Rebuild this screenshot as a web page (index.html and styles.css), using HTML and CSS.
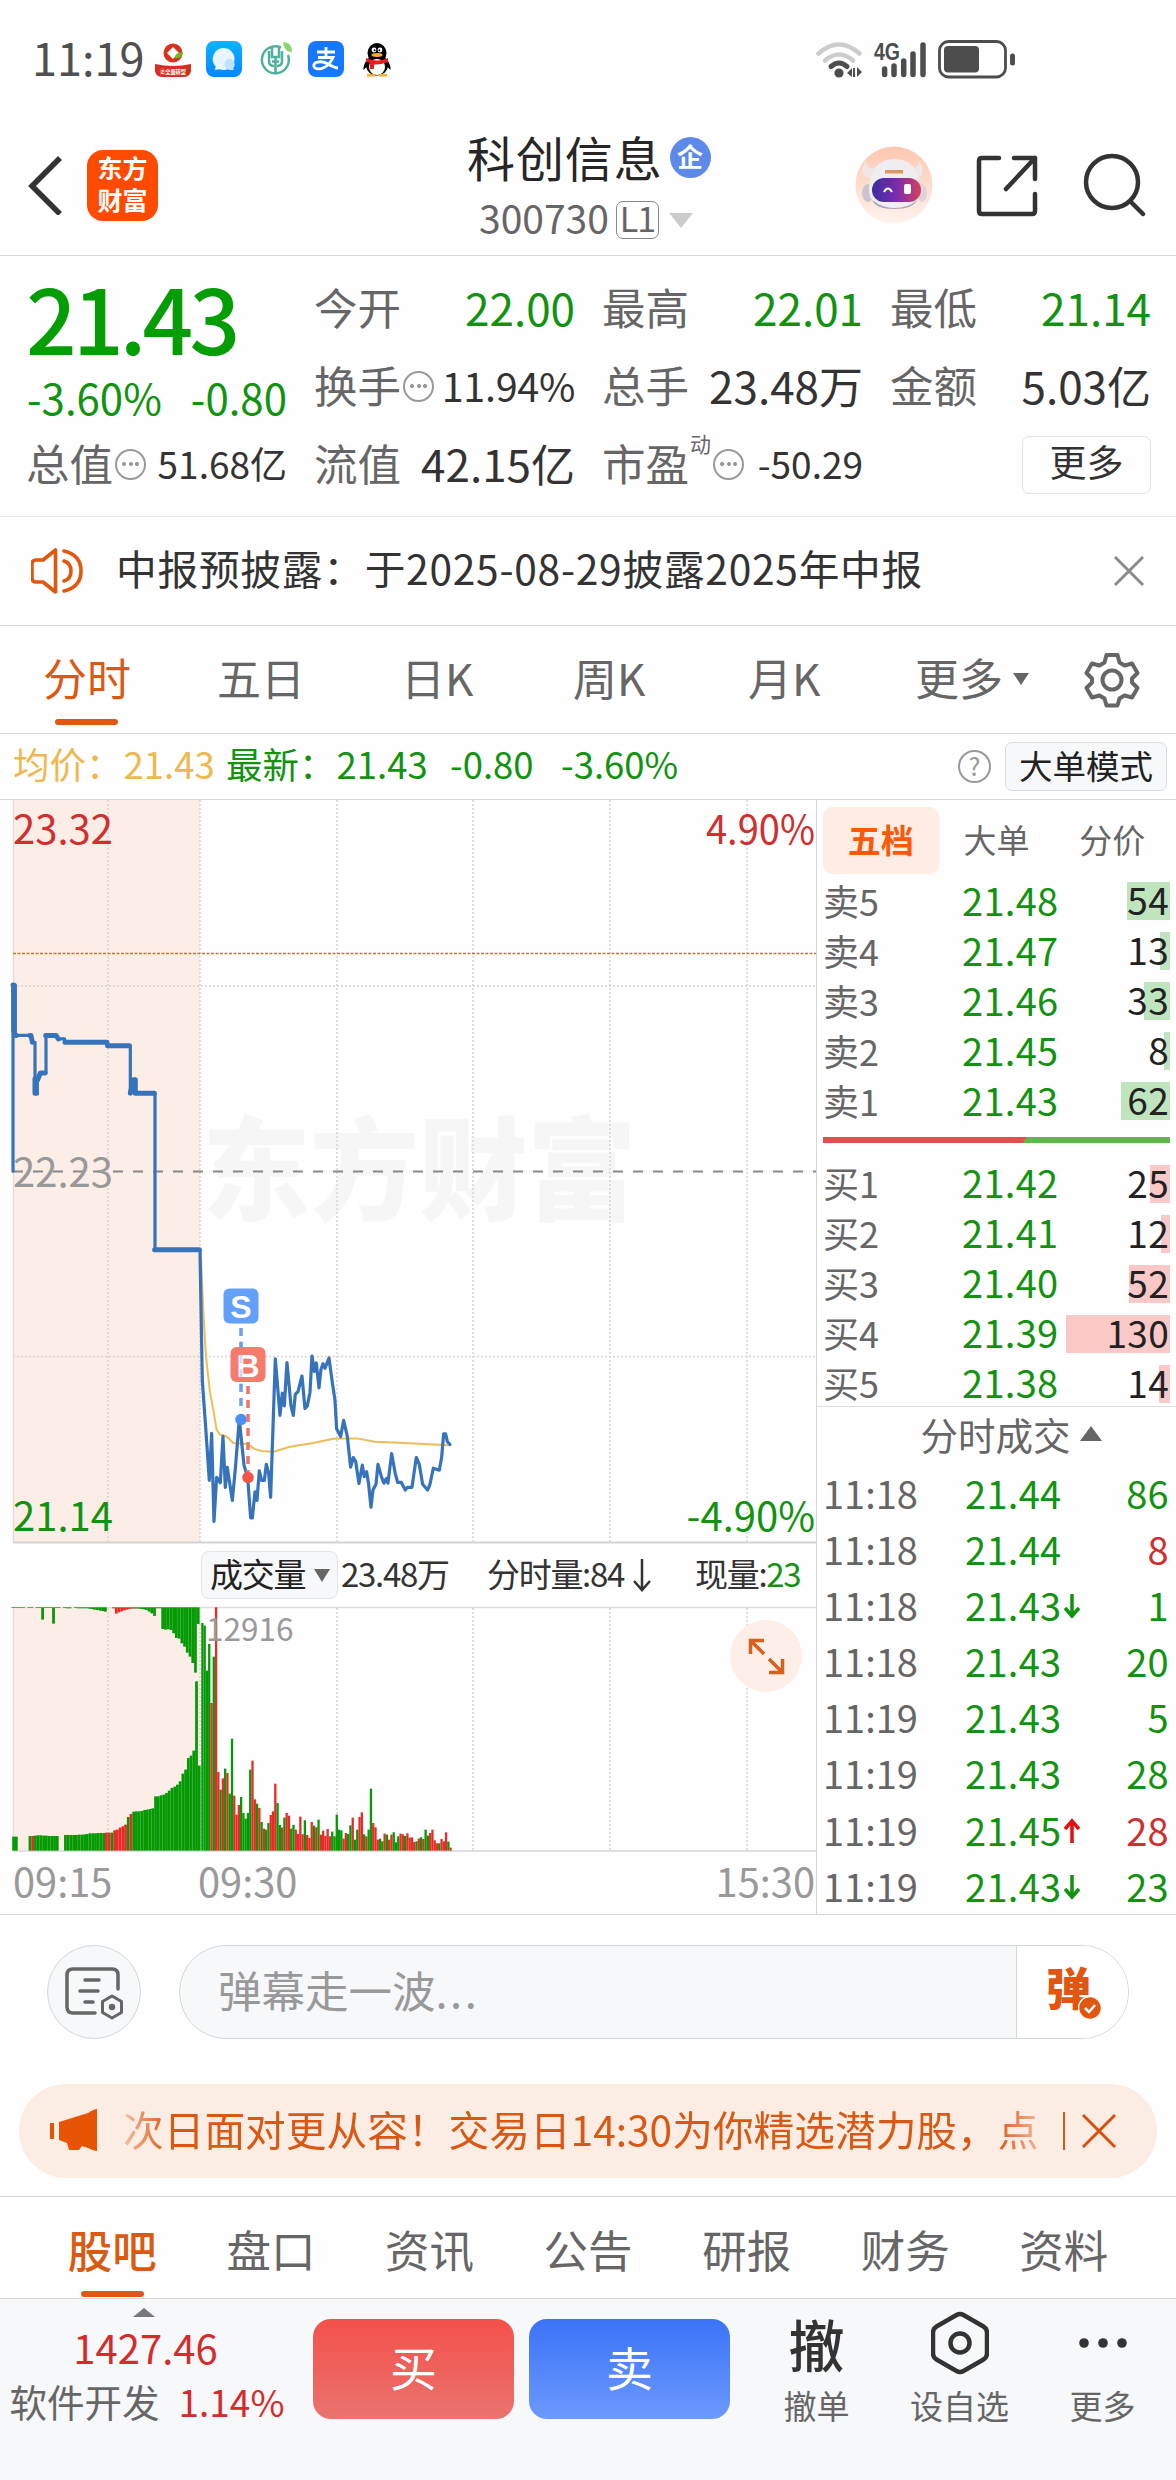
FILE: index.html
```html
<!DOCTYPE html>
<html lang="zh-CN">
<head>
<meta charset="utf-8">
<title>科创信息 300730</title>
<link rel="stylesheet" href="styles.css">
</head>
<body>
<div class="statusbar">
  <span class="clock">11:19</span>
  <svg class="app" viewBox="0 0 36 36"><circle cx="18" cy="12" r="9.500" fill="#d8321f"/><path d="M18 6l6 6-6 6-6-6z" fill="#fff"/><path d="M19 17q2-6 9-6q0 7-9 6z" fill="#7ab51d"/><path d="M0 23q18 4 36 0v7q-1 6-8 6H8q-7 0-8-6z" fill="#d92b20"/><text x="5" y="32.500" font-size="6" font-weight="700" fill="#fff" textLength="26" lengthAdjust="spacingAndGlyphs">㊣全面转型</text></svg>
  <svg class="app" viewBox="0 0 36 36"><defs><linearGradient id="msg" x2="0" y2="1"><stop stop-color="#08b4ff"/><stop offset="1" stop-color="#0886fb"/></linearGradient></defs><rect width="36" height="36" rx="8" fill="url(#msg)"/><path d="M17.500 7a11 11 0 0 1 0 22q-2 0-4-.7L8.500 29q1-1.500 1.200-3.500A11 11 0 0 1 17.500 7z" fill="#e6f5ff"/><path d="M23 18a5.500 5.500 0 0 1 4 9.400l1 1.600q-4 .2-6-.5a5.500 5.500 0 0 1 1-10.500z" fill="#bfe3ff"/></svg>
  <svg class="app" viewBox="0 0 36 36"><g fill="none" stroke="#4fb09c" stroke-width="2.500"><path d="M24 6.500A13.500 13.500 0 1 0 31 14M15 5v11h7V5M15 20.500h7M18.500 16v16M12 10v10q0 5 5 5M25 10v10q0 5-5 5"/></g><path d="M26 1q9 0 9 10q-8 0-9-10z" fill="#8bd56a"/></svg>
  <svg class="app" viewBox="0 0 36 36"><rect width="36" height="36" rx="8" fill="#1677ff"/><g fill="none" stroke="#fff" stroke-width="2.800"><path d="M9 11h18M18 6v10M10 16.500h15q-3 7-9 10q-5 2.500-9 .5q-3-3 1-5.500q6-2 12 1.500t10 4"/></g></svg>
  <svg class="app" viewBox="0 0 36 36"><path d="M7 20q-3 5-2.500 9l4-4zM29 20q3 5 2.500 9l-4-4z"/><ellipse cx="18" cy="24" rx="11" ry="10.500"/><ellipse cx="18" cy="12" rx="9.500" ry="10"/><ellipse cx="18" cy="26" rx="8" ry="8" fill="#fff"/><path d="M8 33h8v2.500H8zM20 33h8v2.500h-8z" fill="#f6b021"/><circle cx="15" cy="9" r="2.400" fill="#fff"/><circle cx="21" cy="9" r="2.400" fill="#fff"/><circle cx="15.600" cy="9.200" r="1"/><circle cx="20.400" cy="9.200" r="1"/><ellipse cx="18" cy="14" rx="5.500" ry="1.900" fill="#f6b021"/><path d="M7 17q11 5 22 0v4q-8 3-14 2.500V28h-4v-6q-3-1-4-2z" fill="#e02020"/></svg>
  <svg class="signals" width="204" height="44" viewBox="814 36 204 44">
    <g fill="none" stroke-width="4.500" stroke-linecap="round"><path d="M818.500 52.500q20.500-18 41 0" stroke="#ccc"/><path d="M825 59.500q14-12 28 0" stroke="#ccc"/><path d="M831 65.500q8-7 16 0" stroke="#4d4d4d" stroke-width="5"/></g>
    <circle cx="839" cy="72" r="4.600" fill="#4d4d4d"/><path d="M847 72l5-5v9zM862 71l-5-5v10zM853 67h2v9h-2z" fill="#4d4d4d"/>
    <text x="874" y="58.500" class="net" textLength="26" lengthAdjust="spacingAndGlyphs">4G</text>
    <g stroke="#4d4d4d" stroke-width="5.500" stroke-linecap="round"><path d="M884.600 68v5.500M894 65v8.500M903.700 60v13.500M913 53v20.500M923 44v29.500"/></g>
    <rect x="939.500" y="40.500" width="66" height="35.500" rx="9" fill="none" stroke="#4d4d4d" stroke-width="2.800"/><rect x="944" y="45" width="35" height="26.500" rx="4" fill="#4d4d4d"/><rect x="1010" y="52.500" width="5" height="12" rx="2.500" fill="#4d4d4d"/>
  </svg>
</div>
<header class="header">
  <svg class="back" width="36" height="60" viewBox="0 0 36 60"><path d="M33 3L5 31L33 59" fill="none" stroke="#333" stroke-width="5.500"/></svg>
  <div class="brand"><span>东方</span><span>财富</span></div>
  <div class="title">
    <div class="name">科创信息<span class="corp">企</span></div>
    <div class="code">300730<span class="level">L1</span><i class="tri-down"></i></div>
  </div>
  <svg class="robot" width="78" height="78" viewBox="0 0 78 78"><defs><linearGradient id="peach" x2="0" y2="1"><stop stop-color="#fdc7af"/><stop offset="1" stop-color="#fef3ee"/></linearGradient><linearGradient id="visor"><stop stop-color="#3a2f9e"/><stop offset=".5" stop-color="#7a2bb0"/><stop offset="1" stop-color="#d8405a"/></linearGradient></defs><circle cx="39" cy="39" r="38.500" fill="url(#peach)"/><path d="M11 15q-5 6-3 13q3 5 10 3L22 22q-10 2-11-7zM64 15q5 6 3 13q-3 5-10 3L53 22q10 2 11-7z" fill="#f1e6e5"/><ellipse cx="13" cy="47" rx="6" ry="9" fill="#ccc4cc"/><ellipse cx="67" cy="47" rx="5" ry="9" fill="#ddd3d8"/><path d="M39 13q25 0 26 30q1 18-25 20Q13 62 14 43Q15 14 39 13z" fill="#efedf0"/><path d="M17 54q10 8 22 8q15 0 23-8q-4 9-23 9q-18 0-22-9z" fill="#aaa3b0"/><path d="M30 24h18v3.500H30z" fill="#dc9a63"/><rect x="17" y="32" width="49" height="24" rx="12" fill="url(#visor)"/><path d="M29 46q4-7 8 0" fill="none" stroke="#fff" stroke-width="2"/><rect x="49" y="38" width="7" height="10" rx="2" fill="#fff"/></svg>
  <svg class="share" width="64" height="64" viewBox="0 0 64 64"><g fill="none" stroke="#333" stroke-width="4.500" stroke-linecap="round" stroke-linejoin="round"><path d="M24 5H7q-3 0-3 3v50q0 3 3 3h50q3 0 3-3V41M39 5h21v21M60 5L31 36"/></g></svg>
  <svg class="search" width="64" height="64" viewBox="0 0 64 64"><g fill="none" stroke="#333" stroke-width="4.500" stroke-linecap="round"><circle cx="29" cy="29" r="26"/><path d="M48 49L60 61"/></g></svg>
</header>

<section class="quote">
  <div class="col up">
    <div class="last green">21.43</div>
    <div class="change green"><span>-3.60%</span><span>-0.80</span></div>
    <div class="cell"><span class="lbl">总值</span><i class="dots"></i><span class="val s37">51.68亿</span></div>
  </div>
  <div class="col">
    <div class="cell"><span class="lbl">今开</span><span class="val green">22.00</span></div>
    <div class="cell"><span class="lbl">换手</span><i class="dots"></i><span class="val s41">11.94%</span></div>
    <div class="cell"><span class="lbl">流值</span><span class="val">42.15亿</span></div>
  </div>
  <div class="col">
    <div class="cell"><span class="lbl">最高</span><span class="val green">22.01</span></div>
    <div class="cell"><span class="lbl">总手</span><span class="val">23.48万</span></div>
    <div class="cell"><span class="lbl">市盈</span><span class="sup">动</span><i class="dots"></i><span class="val s37">-50.29</span></div>
  </div>
  <div class="col">
    <div class="cell"><span class="lbl">最低</span><span class="val green">21.14</span></div>
    <div class="cell"><span class="lbl">金额</span><span class="val">5.03亿</span></div>
    <div class="cell"><span class="more">更多</span></div>
  </div>
</section>

<div class="notice">
  <svg width="54" height="50" viewBox="0 0 54 50"><g fill="none" stroke="#e2570f" stroke-width="3.600" stroke-linejoin="round" stroke-linecap="round"><path d="M24.500 4v42L12 36H5q-4 0-4-4V18q0-4 4-4h7zM33 15q7 2 7 10t-7 10M33 5q17 4 17 20T33 45"/></g></svg>
  <span class="msg">中报预披露：于2025-08-29披露2025年中报</span>
  <svg width="32" height="32" viewBox="0 0 32 32"><path d="M2 2l28 28M30 2L2 30" stroke="#8a8a8a" stroke-width="3"/></svg>
</div>

<nav class="periods">
  <span class="p1 on">分时</span><span class="p2">五日</span><span class="p3">日K</span><span class="p4">周K</span><span class="p5">月K</span><span class="p6">更多<i class="tri"></i></span>
  <svg width="56" height="56" viewBox="0 0 56 56"><g fill="none" stroke="#666" stroke-width="4" stroke-linejoin="round"><path d="M22.500 3h11l2 7.500 5 3 7.500-2 5.500 9.500-5.500 5.500v4l5.500 5.500-5.500 9.500-7.500-2-5 3-2 7h-11l-2-7-5-3-7.500 2-5.500-9.500 5.500-5.500v-4l-5.500-5.500 5.500-9.500 7.500 2 5-3z"/><circle cx="28" cy="28" r="9.500"/></g></svg>
</nav>

<div class="info">
  <span class="avg">均价：<b>21.43</b></span><span class="now">最新：<b>21.43</b></span><span class="d1">-0.80</span><span class="d2">-3.60%</span>
  <span class="help">?</span><span class="mode">大单模式</span>
</div>

<main class="board">
  <section class="charts">
    <svg class="price" width="816" height="744" viewBox="0 0 816 744">
      <rect x="13" y="0" width="187" height="742" fill="#fceee7"/>
      <text class="mark" x="202" y="412" textLength="434" lengthAdjust="spacingAndGlyphs">东方财富</text>
      <g stroke="#d4d4d4" stroke-width="1.500" stroke-dasharray="2 2"><path d="M108 0V742M200 0V742M337 0V742M473 0V742M610 0V742M747 0V742M13 186H816M13 556.500H816"/></g>
      <path d="M13.500 0V742" stroke="#ddd" stroke-width="1.500"/>
      <path d="M13 153.500H816" stroke="#bb7a2c" stroke-width="1.500" stroke-dasharray="3 1.500"/>
      <path d="M13 371.500H816" stroke="#888" stroke-width="1.800" stroke-dasharray="10 10"/>
      <path d="M13 742.500H816" stroke="#d4d4d4" stroke-width="2"/>
      <g transform="translate(0 160) scale(.3333 .3827)" fill="none" stroke-linejoin="round" stroke-linecap="round">
        <path class="avgline" d="M602 757L610 920L618 1035L630 1130L641 1180L650 1228L660 1240L680 1245L700 1262L743 1265L765 1278L785 1283L822 1285L870 1272L940 1262L1000 1251L1070 1250L1125 1259L1180 1261L1350 1268"/>
        <path class="line" d="M39 552V65H46V197H92L97 215H105V348H112V313L121 295H138V197H168L175 206H194V215H321V224H391V348L400 313H406V348H465V757H600L607 1100L617 1220L628 1360L635 1237L642 1467L650 1352L661 1366L669 1245L676 1378L682 1326L697 1412L706 1330L718 1200L732 1320L743 1352L752 1458H757L765 1390L771 1412L778 1335L785 1360H793L799 1318L806 1340L812 1404L826 1042L840 1190L847 1132L853 1165L861 1052L873 1165L880 1190L886 1135L894 1128L906 1087L915 1172L922 1165L930 1130L936 1035L943 1075L949 1053L957 1118L963 1070L969 1055L975 1067L987 1040L998 1110L1005 1150L1010 1225L1022 1245L1031 1203L1042 1245L1052 1325L1060 1300L1067 1310L1077 1368L1087 1320L1093 1350L1100 1337L1106 1370L1113 1430L1119 1385L1128 1370L1134 1318L1145 1352L1152 1367L1159 1355L1164 1367L1175 1290L1186 1342L1193 1365H1204L1216 1385L1222 1378H1236L1249 1300L1258 1318L1268 1370L1283 1385L1290 1370L1300 1328L1318 1333L1325 1300L1331 1238H1337L1342 1258L1350 1266"/>
        <path class="line thick" d="M39 65H41V185M47 197H49M90 197H93L97 215M105 348V310M105 348H110M113 313L121 295H135M137 197H168L175 206M195 215H321M323 224H388M391 348L400 313H406V348H463M464 757H598"/>
      </g>
      <path d="M241 528v80" stroke="#6c9fec" stroke-width="3.500" stroke-dasharray="8 6"/>
      <circle cx="241" cy="619.500" r="5.800" fill="#4a8ff5"/>
      <rect x="223.500" y="488.500" width="35" height="35" rx="6" fill="#62a0fb"/><text class="tag" x="241" y="518">S</text>
      <rect x="230.500" y="547" width="35" height="35" rx="6" fill="#f77b6c"/><text class="tag" x="248" y="576.500">B</text>
      <path d="M241 541v44" stroke="#6c9fec" stroke-opacity=".35" stroke-width="3" stroke-dasharray="8 6"/>
      <path d="M248 586v90" stroke="#ee7468" stroke-width="3.500" stroke-dasharray="8 6"/>
      <circle cx="248" cy="677.500" r="5.800" fill="#f45448"/>
      <g class="axis"><text x="13" y="43.500" fill="#cf2f2f">23.32</text><text x="13" y="386.500" fill="#999">22.23</text><text x="13" y="731" fill="#11930f">21.14</text>
      <text x="815" y="43.500" fill="#cf2f2f" text-anchor="end" textLength="109" lengthAdjust="spacingAndGlyphs">4.90%</text><text x="815" y="731" fill="#11930f" text-anchor="end">-4.90%</text></g>
    </svg>
    <div class="volbar"><span class="pill">成交量<i></i></span><span class="v1">23.48万</span><span class="v2">分时量:84<svg width="18" height="34" viewBox="0 0 18 34"><path d="M9 1v30M1 23l8 9 8-9" fill="none" stroke="#333" stroke-width="2.500"/></svg></span><span class="v3">现量:<em>23</em></span></div>
    <svg class="volume" width="816" height="248" viewBox="0 0 816 248">
      <rect x="13" y="2" width="187" height="243" fill="#fceee7"/>
      <path d="M13 1.500H816M13.500 1V245" stroke="#ddd" stroke-width="1.500"/>
      <path d="M108 2V245M200 2V245M337 2V245M473 2V245M610 2V245M747 2V245" stroke="#d4d4d4" stroke-width="1.500" stroke-dasharray="2 2"/>
      <path d="M13 245H816" stroke="#e0e0e0" stroke-width="2"/>
      <g id="bars"></g>
      <text class="peak" x="206" y="35">12916</text>
      <circle cx="766" cy="50" r="36" fill="#fdefe7"/>
      <g fill="none" stroke="#d85f1c" stroke-width="3.500"><path d="M750.500 48V34.500H764M751 35l13 13M782.500 53V66.500H769M782 66L769 53"/></g>
    </svg>
    <div class="times"><span>09:15</span><span>09:30</span><span>15:30</span></div>
  </section>
  <aside class="depth">
    <div class="dtabs"><span class="on">五档</span><span>大单</span><span>分价</span></div>
    <div class="rows sell">
      <div><span>卖5</span><b>21.48</b><em>54<i style="width:43px"></i></em></div>
      <div><span>卖4</span><b>21.47</b><em>13<i style="width:10px"></i></em></div>
      <div><span>卖3</span><b>21.46</b><em>33<i style="width:26px"></i></em></div>
      <div><span>卖2</span><b>21.45</b><em>8<i style="width:6px"></i></em></div>
      <div><span>卖1</span><b>21.43</b><em>62<i style="width:49px"></i></em></div>
    </div>
    <div class="ratio"></div>
    <div class="rows buy">
      <div><span>买1</span><b>21.42</b><em>25<i style="width:20px"></i></em></div>
      <div><span>买2</span><b>21.41</b><em>12<i style="width:9px"></i></em></div>
      <div><span>买3</span><b>21.40</b><em>52<i style="width:41px"></i></em></div>
      <div><span>买4</span><b>21.39</b><em>130<i style="width:104px"></i></em></div>
      <div><span>买5</span><b>21.38</b><em>14<i style="width:11px"></i></em></div>
    </div>
    <div class="ticks-head">分时成交<i></i></div>
    <div class="ticks">
      <div><span>11:18</span><b>21.44</b><em>86</em></div>
      <div><span>11:18</span><b>21.44</b><em class="red">8</em></div>
      <div><span>11:18</span><b>21.43<svg viewBox="0 0 18 26"><path d="M9 1v22M2 15l7 8 7-8"/></svg></b><em>1</em></div>
      <div><span>11:18</span><b>21.43</b><em>20</em></div>
      <div><span>11:19</span><b>21.43</b><em>5</em></div>
      <div><span>11:19</span><b>21.43</b><em>28</em></div>
      <div><span>11:19</span><b>21.45<svg class="rise" viewBox="0 0 18 26"><path d="M9 25V3M2 11l7-8 7 8"/></svg></b><em class="red">28</em></div>
      <div><span>11:19</span><b>21.43<svg viewBox="0 0 18 26"><path d="M9 1v22M2 15l7 8 7-8"/></svg></b><em>23</em></div>
    </div>
  </aside>
</main>

<div class="danmu">
  <div class="setting"><svg width="60" height="56" viewBox="0 0 60 56"><g fill="none" stroke="#666" stroke-width="3.500" stroke-linecap="round"><path d="M54 23V9q0-6-6-6H9Q3 3 3 9v32q0 6 6 6h22M21 14h14M16 25h18M21 36h8"/><path d="M48 30l9.500 5.500v11L48 52l-9.500-5.500v-11z" stroke-width="3" stroke-linejoin="round" fill="#f7f8fa"/></g><circle cx="48" cy="41" r="3.200" fill="#666"/></svg></div>
  <div class="field"><span class="hint">弹幕走一波<em>...</em></span><span class="send">弹<svg width="24" height="24" viewBox="0 0 24 24"><circle cx="12" cy="12" r="11.500" fill="#e2570f" stroke="#fff" stroke-width="1.500"/><path d="M7 12l4 4 6-7" fill="none" stroke="#fff" stroke-width="2.500"/></svg></span></div>
</div>

<div class="banner">
  <svg width="48" height="44" viewBox="0 0 48 44"><path d="M0 14h4v16H0zM9 13L38 4Q44 0 47 0v42q-3 0-9-3l-6-2-3 4H19l-2-7-8-3z" fill="#e85405"/></svg>
  <span class="promo">次日面对更从容！交易日14:30为你精选潜力股，点</span>
  <i class="sep"></i>
  <svg width="36" height="36" viewBox="0 0 36 36"><path d="M2 2l32 32M34 2L2 34" stroke="#d8500f" stroke-width="3"/></svg>
</div>

<nav class="sections"><span class="on">股吧</span><span>盘口</span><span>资讯</span><span>公告</span><span>研报</span><span>财务</span><span>资料</span></nav>

<footer class="bottom">
  <div class="index"><i></i><span class="pt">1427.46</span><span class="sector">软件开发<b>1.14%</b></span></div>
  <div class="btn buybtn">买</div><div class="btn sellbtn">卖</div>
  <div class="act a1"><span class="glyph">撤</span><span>撤单</span></div>
  <div class="act a2"><span class="glyph"><svg width="58" height="64" viewBox="0 0 58 64"><g fill="none" stroke="#333" stroke-width="4.500" stroke-linejoin="round"><path d="M25.500 4q3.500-2 7 0l20 11.500q3.500 2 3.500 6v21q0 4-3.500 6L32.500 60q-3.500 2-7 0l-20-11.500q-3.500-2-3.500-6v-21q0-4 3.500-6z"/><circle cx="29" cy="32" r="9.500"/></g></svg></span><span>设自选</span></div>
  <div class="act a3"><span class="glyph"><svg width="50" height="12" viewBox="0 0 50 12"><g fill="#333"><circle cx="6" cy="6" r="4.800"/><circle cx="25" cy="6" r="4.800"/><circle cx="44" cy="6" r="4.800"/></g></svg></span><span>更多</span></div>
</footer>
<script src="chart.js"></script>
</body>
</html>
```
FILE: styles.css
```css
*{box-sizing:border-box}
body{margin:0;width:1176px;height:2480px;background:#fefefe;color:#333;font-family:"Noto Sans CJK SC",sans-serif;line-height:1;overflow:hidden;white-space:nowrap}
i,em,b{font-style:normal;font-weight:400}
svg{display:block;flex:none}
.green{color:#11930f}
.statusbar{height:117px;display:flex;align-items:center;padding-left:32px}
.clock{font-size:45px;color:#505050;width:123px;line-height:52px;padding-bottom:3px}
.app{width:36px;height:36px;margin-right:15px}
.signals{margin-left:404px}
.net{font:700 23px "Liberation Sans",sans-serif;fill:#4d4d4d}
.header{height:139px;border-bottom:1.500px solid #d6d6d6;display:flex;align-items:center;padding:0 29px 2px 27px}
.brand{width:71px;height:71px;margin-left:24px;border-radius:16px;background:#ff4a00;color:#fff;font-size:25px;font-weight:700;display:flex;flex-direction:column;align-items:center;justify-content:center;gap:7px;padding-bottom:3px}
.title{flex:1;padding-left:309px;margin-top:3px}
.name{font-size:48px;letter-spacing:.9px;color:#262626;display:flex;align-items:center;height:56px}
.corp{width:41px;height:41px;border-radius:50%;background:#5d8ae8;color:#fff;font-size:26px;font-weight:700;display:flex;align-items:center;justify-content:center;padding-bottom:3px;margin:4px 0 0 7px;letter-spacing:0}
.code{font-size:39px;color:#666;display:flex;align-items:center;height:56px;padding-left:12px;margin-top:6px}
.level{border:1.500px solid #888;border-radius:7px;width:43px;height:38px;font-size:34px;display:flex;align-items:center;justify-content:center;margin:5px 0 0 7px;padding-bottom:4px;letter-spacing:-1px}
.tri-down{border:12px solid transparent;border-top:15px solid #ccc;border-bottom:0;margin:5px 0 0 10px}
.share{margin:0 44px 0 42px}
.robot{flex:none}
.quote{height:261px;border-bottom:1px solid #e8e8e8;display:flex;gap:27px;padding:12px 25px 0 26px}
.col{width:261px}
.cell{height:78px;display:flex;align-items:center}
.last{height:103px;line-height:98px;font-size:89px;font-weight:500;letter-spacing:-3.800px;color:#049e04}
.change{height:53px;line-height:51px;font-size:42px;display:flex;justify-content:space-between;padding-left:1px}
.lbl{font-size:43.500px;color:#666}
.val{font-size:44px;margin-left:auto}
.s37{font-size:37px}.s41{font-size:39.500px;letter-spacing:-.3px}
.dots{width:31px;height:31px;border:2px solid #999;border-radius:50%;flex:none;margin-left:2px;margin-top:2px;background:radial-gradient(circle,#999 1.700px,transparent 2.300px) 50% 50%/8px 8px no-repeat,radial-gradient(circle,#999 1.700px,transparent 2.300px) 3px 50%/8px 8px no-repeat,radial-gradient(circle,#999 1.700px,transparent 2.300px) 16px 50%/8px 8px no-repeat}
.sup{font-size:21px;color:#666;align-self:flex-start;margin:9px 0 0 1px}
.more{margin-left:auto;width:129px;height:58px;border:1.500px solid #e2e2e2;border-radius:7px;font-size:37px;display:flex;align-items:center;justify-content:center;padding-bottom:6px;margin-top:3px}
.notice{height:109px;border-bottom:1.500px solid #d6d6d6;display:flex;align-items:center;padding:0 31px}
.msg{flex:1;font-size:40.700px;letter-spacing:.75px;margin-left:31px;padding-bottom:5px}
.periods{height:108px;border-bottom:1.500px solid #d6d6d6;display:flex;align-items:center;font-size:44px;color:#666;padding-left:43px}
.periods span{height:100%;display:flex;align-items:center;padding-bottom:5px;position:relative}
.periods .on{color:#da5a12}
.on::after{content:"";position:absolute;width:63px;height:6px;border-radius:3px;background:#e2570f}
.periods .on::after{left:12px;bottom:8px}
.p1{width:174px}.p2{width:184px}.p3{width:172px}.p4{width:175px}.p5{width:167px}.p6{width:169px}
.tri{border:8px solid transparent;border-top:12px solid #666;border-bottom:0;margin:3px 0 0 10px}
.info{height:66px;border-bottom:1.500px solid #d6d6d6;display:flex;align-items:center;font-size:36.500px;color:#11930f;padding-left:13px}
.info>span{padding-bottom:4px}
.avg{color:#efb84f;width:213px}
.avg b,.now b{margin-left:1px}
.now{width:224px}.d1{width:111px}
.info .help{margin-left:397px;width:33px;height:33px;border:2.500px solid #999;border-radius:50%;font-size:25px;color:#999;display:flex;align-items:center;justify-content:center;padding-bottom:3px}
.d2{width:0}
.info .mode{margin-left:14px;width:162px;height:49px;background:#f7f8fa;border:1.500px solid #dadce0;border-radius:7px;font-size:33.500px;color:#222;display:flex;align-items:center;justify-content:center}
.board{height:1115px;display:flex;border-bottom:1.500px solid #d6d6d6}
.charts{width:817px;border-right:1.500px solid #d6d6d6}
.line{stroke:#3673bb;stroke-width:3.200px;vector-effect:non-scaling-stroke}
.thick{stroke-width:5px}
.avgline{stroke:#efbc55;stroke-width:2px;vector-effect:non-scaling-stroke}
.mark{font-size:112px;font-weight:900;fill:#f6f6f6}
.axis{font-size:40px}
.tag{font:700 32px "Liberation Sans",sans-serif;fill:#fff;text-anchor:middle}
.volbar{height:62px;display:flex;align-items:center;font-size:33px;padding:0 0 0 201px;letter-spacing:-1.300px}
.volbar span{padding-bottom:4px;display:flex;align-items:center}
.volbar .pill{width:137px;height:48px;background:#f7f8fa;border:1.500px solid #e2e4e8;border-radius:8px;padding-left:8px;color:#222}
.pill i{border:8px solid transparent;border-top:13px solid #666;border-bottom:0;margin:4px 0 0 9px}
.v1{width:146px;margin-left:3px}.v2{width:208px}.v2 svg{margin:4px 0 0 9px}.v3 em{color:#11930f}
.peak{font-size:31.500px;fill:#999}
.bg{fill:#049a04}.br{fill:#e92b28}
.times{display:flex;font-size:39.800px;color:#999;padding:6px 1px 0 13px}
.times span{width:185px}
.times span:last-child{margin-left:auto;text-align:right}
.depth{width:359px;padding:7px 6px 0 6px}
.dtabs{display:flex;font-size:33px;color:#666;height:67px}
.dtabs span{width:116px;display:flex;align-items:center;justify-content:center;padding-bottom:3px}
.dtabs .on{background:#feede4;color:#f8590a;font-weight:700;border-radius:9px}
.dtabs .on::after{content:none}
.rows{margin-top:2px}
.rows div{height:50.100px;display:flex;align-items:center;font-size:37px;padding-bottom:3px}
.rows span{width:139px;font-size:36px;color:#666}
.rows b{color:#11930f;font-size:38px;letter-spacing:.3px}
.rows em{margin-left:auto;position:relative;z-index:0;color:#222;padding-right:1px;letter-spacing:.3px}
.rows i{position:absolute;right:0;top:1px;height:38px;z-index:-1;background:#bfe5bf}
.buy i{background:#fbc8c8}
.ratio{height:6px;margin-top:11px;background:linear-gradient(125deg,#df504e 0 58%,#60b74e 58%)}
.rows.buy{margin-top:15px}
.ticks-head{height:59px;border-top:1.500px solid #ddd;margin:-3px -6px 0;display:flex;align-items:center;justify-content:center;font-size:37.500px;color:#666;padding-bottom:4px;padding-left:29px}
.ticks-head i{border:11.500px solid transparent;border-bottom:15px solid #666;border-top:0;margin-left:9px}
.ticks div{height:56.100px;display:flex;align-items:center;font-size:38px}
.ticks span{width:142px;color:#666}
.ticks b{color:#11930f;display:flex;align-items:center;letter-spacing:.3px}
.ticks em{margin-left:auto;color:#11930f;letter-spacing:.3px;padding-right:1px}
.ticks em.red{color:#cf2f2f}
.ticks svg{width:18px;height:26px;margin:2px 0 0 2px;fill:none;stroke:#11930f;stroke-width:3.500px}
.ticks svg.rise{stroke:#e01212}
.danmu{height:153px;display:flex;align-items:center;padding-left:47px}
.setting,.field{border:1.500px solid #d4d7dc;background:#f7f8fa;height:94px;border-radius:47px}
.setting{width:94px;display:flex;align-items:center;justify-content:center;padding-top:4px}
.field{margin-left:38px;width:950px;display:flex;overflow:hidden}
.hint{width:837px;border-right:1.500px solid #d4d7dc;font-size:43.500px;color:#999;line-height:87px;padding-left:38px}
.hint em{letter-spacing:2.500px}
.send{flex:1;background:#fff;color:#e2570f;font-weight:900;font-size:45px;line-height:82px;padding-left:29px;position:relative}
.send svg{position:absolute;left:61px;top:50px}
.banner{margin:16px 19px 18px;height:94px;border-radius:47px;background:#fcede4;display:flex;align-items:center;padding-left:31px}
.promo{margin-left:25px;width:920px;font-size:40.700px;line-height:60px;padding-bottom:4px;color:#d95914;-webkit-mask-image:linear-gradient(90deg,rgba(0,0,0,.3),#000 5%,#000 95%,rgba(0,0,0,.3))}
.sep{width:1.500px;height:38px;background:#d95914;margin:0 16px 0 20px}
.sections{height:103px;border-top:1.500px solid #d6d6d6;border-bottom:1.500px solid #d6d6d6;display:flex;padding-left:33px;font-size:44.500px;color:#666}
.sections span{width:158.600px;text-align:center;line-height:104px;height:100px;position:relative}
.sections .on{color:#da5a12;font-weight:500}
.sections .on::after{left:48px;bottom:0}
.bottom{height:181px;background:#f7f8fa;display:flex}
.index{width:313px;display:flex;flex-direction:column;align-items:center;padding-right:22px;color:#d42c2c}
.index i{border:11px solid transparent;border-bottom:9px solid #777;border-top:0;margin-top:9px;margin-left:-3px}
.pt{font-size:40px;line-height:61px}
.sector{font-size:37.500px;line-height:45px;color:#666;padding-left:3px}
.sector b{color:#d42c2c;margin-left:19px;font-size:37px}
.btn{width:201px;height:100px;margin:20px 15px 0 0;border-radius:18px;color:#fff;font-size:47px;line-height:94px;text-align:center}
.buybtn{background:linear-gradient(#f4504a,#ea736e)}
.sellbtn{background:linear-gradient(#3a73f7,#6d99fd)}
.act{display:flex;flex-direction:column;align-items:center;font-size:33px;color:#666;width:143px}
.glyph{height:60px;margin:15px 0 15px;display:flex;align-items:center;font-size:56px;font-weight:500;color:#333;padding-bottom:2px}
```
FILE: chart.js
```js
// Intraday volume. Values are plot heights on a 730-unit scale, "r" = rising bar, "g" = falling bar.
const NS = "http://www.w3.org/2000/svg";
const holder = document.getElementById("bars");
const SX = 0.523, SY = 1 / 3, FLOOR = 730;

function bar(x, y0, y1, kind, w) {
  const r = document.createElementNS(NS, "rect");
  r.setAttribute("x", ((x - w / 2) * SX).toFixed(2));
  r.setAttribute("width", (w * SX).toFixed(2));
  r.setAttribute("y", (y0 * SY + 1.3).toFixed(2));
  r.setAttribute("height", ((y1 - y0) * SY).toFixed(2));
  r.setAttribute("class", "b" + kind);
  holder.appendChild(r);
}

// Call auction: matched volume rises from the floor.
const auction = "g42 g42 -0 -0 -0 -0 g44 r44 g45 g46 g46 g45 g45 g44 g44 g44 g44 -0 -0 g47 g47 g47 g47 g47 g48 g48 g49 g50 g52 g52 g52 g53 g53 g53 r54 r54 g54 r61 r63 r69 r73 r78 g101 r110 g117 g118 g118 g119 g122 g123 g125 g127 g163 g163 g166 g168 g173 g180 g188 g192 g198 g208 g231 g243 g278 g285 g300 g508 g255".split(" ");
auction.forEach((s, i) => { if (s[0] !== "-") bar(26 + i * 5.22, FLOOR - +s.slice(1), FLOOR, s[0], 5.3); });

// Call auction: unmatched volume hangs from the top.
const pending = "g2 g2 g2 g2 g2 -0 g2 g2 -0 g2 g2 g37 g2 g2 g2 g49 g2 g2 -0 g2 g3 g3 -0 g2 g3 g3 g3 g3 g4 g5 g7 g8 g10 g11 g13 -0 -0 r3 r19 r15 r12 r9 r7 r5 g4 r4 g4 g5 g6 g8 g13 g18 g26 g3 g3 g65 g67 g66 g68 g78 g92 g94 g108 g118 g136 g148 g167 g196 g50".split(" ");
pending.forEach((s, i) => { if (s[0] !== "-") bar(24 + i * 5.22, 0, +s.slice(1), s[0], 5.3); });

// Continuous session, one bar a minute from 09:30.
const session = "g683 g675 g540 g620 r443 g582 r730 r236 g183 r217 g246 r233 g171 g336 r165 r108 r137 g161 g113 g96 g113 g243 r270 r154 g141 r128 g86 r66 g63 g83 r107 r118 r201 g143 g77 r69 g99 r113 r105 g66 g77 r63 r50 r102 r49 g91 r47 r38 r86 g75 r70 g93 r48 r60 r44 r65 r43 g57 g43 g108 g63 g61 r36 r53 g50 g76 r99 g33 g63 r101 r115 g49 r43 g63 g186 r83 r70 r33 g36 g28 r51 g48 r33 r48 g55 g25 g43 r51 r49 g44 r52 r39 r40 r26 g28 r36 g40 r35 g63 g45 r53 r63 r31 r22 g22 r35 r28 r55 g27 r9".split(" ");
session.forEach((s, i) => bar(387 + i * 4.355, FLOOR - +s.slice(1), FLOOR, s[0], 4.4));
```
